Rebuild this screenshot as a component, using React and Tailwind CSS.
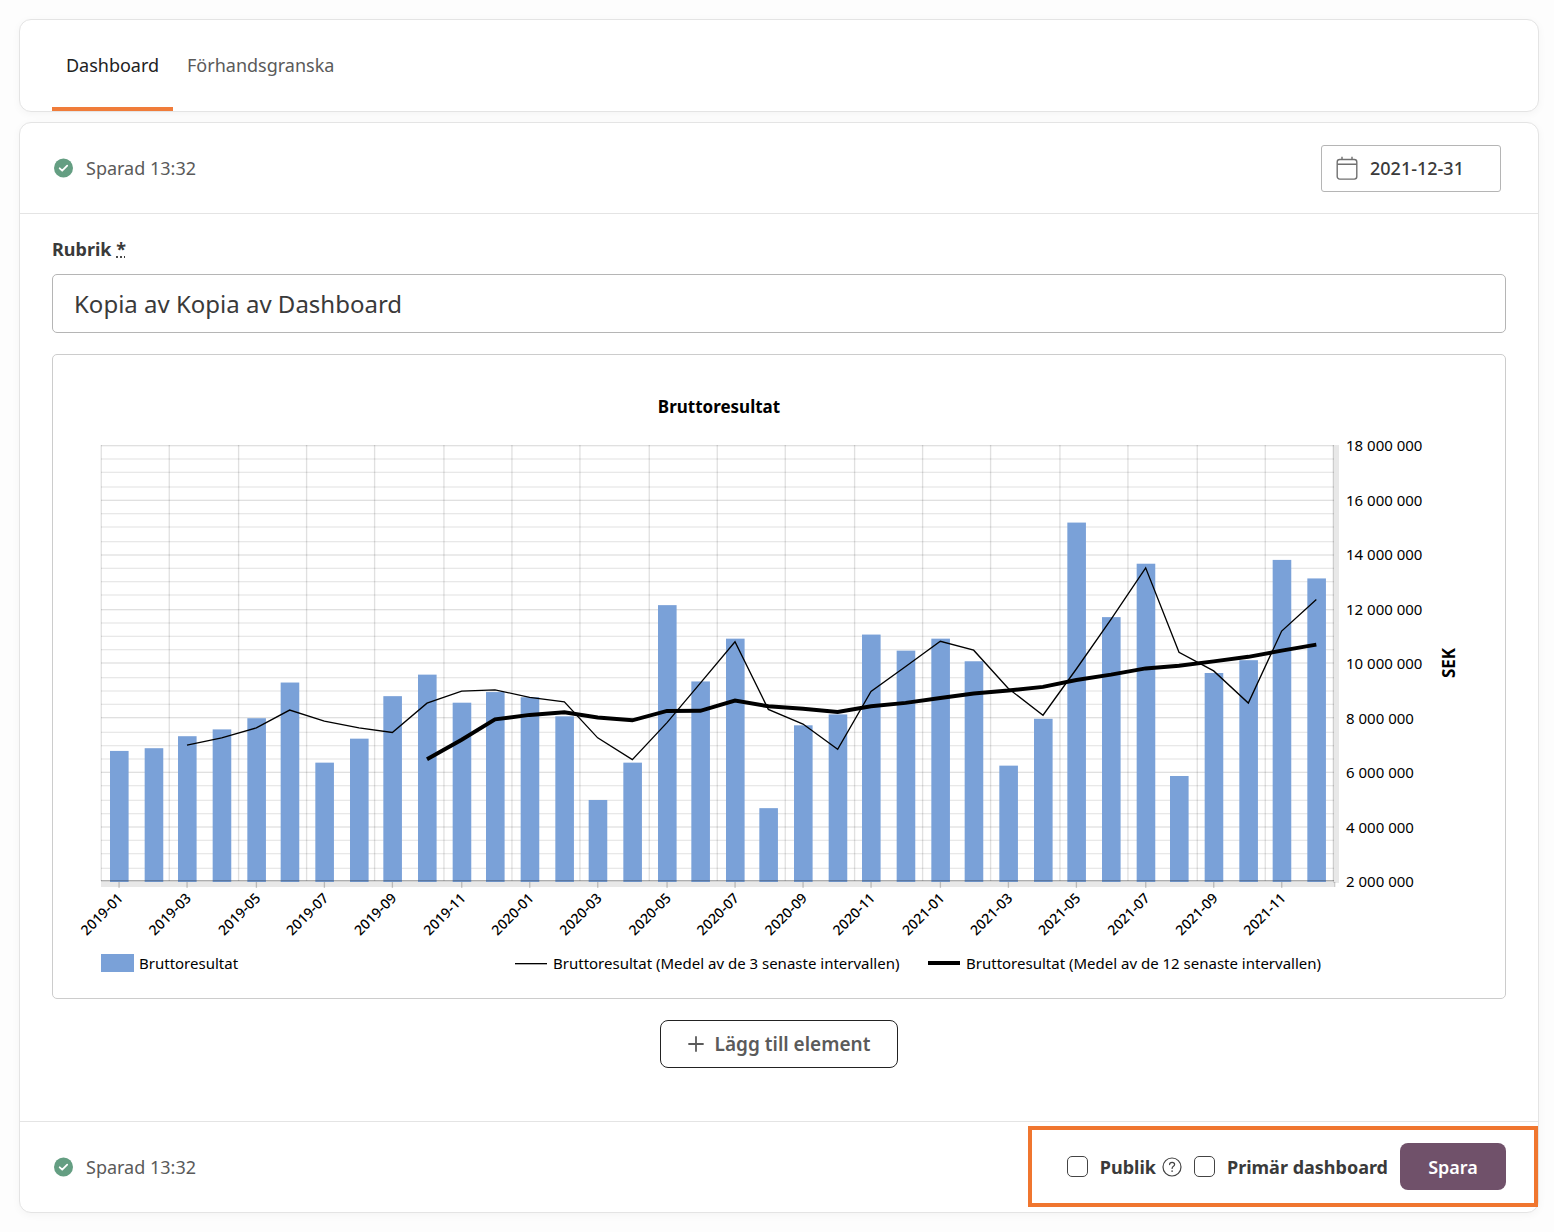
import React, { useState } from "react";

// Monthly gross profit in MSEK, starting 2019-01
const values = [
  6.81, 6.91, 7.35, 7.6, 8.01, 9.32, 6.38, 7.26, 8.82, 9.61, 8.58, 8.97,
  8.78, 8.08, 5.01, 6.38, 12.16, 9.36, 10.93, 4.71, 7.75, 8.15, 11.08, 10.49,
  10.93, 10.1, 6.27, 7.99, 15.19, 11.72, 13.68, 5.89, 9.67, 10.14, 13.82, 13.14,
];

const PLOT = { left: 48, right: 1281, top: 91, bottom: 527 };
const MAX = 18;
const MIN = 2;

const snap = (v) => (Math.round(v * 0.75) * 4) / 3;
const xAt = (i) => 66 + snap(i * 34.21);
const yAt = (v) =>
  PLOT.top + ((MAX - v) / (MAX - MIN)) * (PLOT.bottom - PLOT.top);

const monthLabel = (i) =>
  `${2019 + Math.floor(i / 12)}-${String((i % 12) + 1).padStart(2, "0")}`;

// Points of a trailing average over the last n months
const average = (n, start) =>
  values
    .map((_, i) => {
      const part = values.slice(Math.max(0, i - n + 1), i + 1);
      return [xAt(i), yAt(part.reduce((a, b) => a + b, 0) / n)];
    })
    .slice(start)
    .map((p) => p.join(","))
    .join(" ");

function Chart() {
  const rows = Array.from({ length: 32 }, (_, i) => i);
  const columns = Array.from({ length: 19 }, (_, i) => i);
  const axisLabels = [18, 16, 14, 12, 10, 8, 6, 4, 2];

  return (
    <svg
      viewBox="0 0 1452 643"
      className="block h-auto w-full"
      role="img"
      aria-label="Bruttoresultat"
    >
      <text
        x="666"
        y="58"
        textAnchor="middle"
        className="fill-black text-[17px] font-bold"
      >
        Bruttoresultat
      </text>

      {/* Grid */}
      {rows.map((i) => (
        <rect
          key={i}
          x={PLOT.left}
          y={PLOT.top + snap(i * 13.62) - 1}
          width={PLOT.right - PLOT.left}
          height="1.33"
          fill="#000"
          opacity={i % 4 === 0 ? 0.12 : 0.09}
        />
      ))}
      {columns.map((i) => (
        <rect
          key={i}
          x={PLOT.left + snap(i * 68.46) - 0.4}
          y={PLOT.top - 1}
          width="1.33"
          height={PLOT.bottom - PLOT.top}
          fill="#000"
          opacity="0.12"
        />
      ))}

      {/* Axis bands */}
      <rect x="1280" y="90" width="6" height="438" fill="#000" opacity="0.09" />
      <rect x="48" y="525" width="1233" height="7" fill="#000" opacity="0.09" />

      {/* Bars */}
      {values.map((v, i) => (
        <rect
          key={i}
          x={xAt(i) - 9}
          y={yAt(v)}
          width="18.6"
          height={PLOT.bottom - yAt(v)}
          fill="#7aa1d8"
        />
      ))}
      <rect x="48" y="525" width="1233" height="1.33" fill="#000" opacity="0.25" />

      {values.map((_, i) =>
        i % 2 === 0 ? (
          <g key={i}>
            <rect
              x={xAt(i) - 0.6}
              y="527"
              width="1.33"
              height="6"
              fill="#000"
              opacity="0.2"
            />
            <text
              transform={`translate(${xAt(i) + 5} 544) rotate(-45)`}
              textAnchor="end"
              className="fill-black text-[14px] font-medium"
            >
              {monthLabel(i)}
            </text>
          </g>
        ) : null
      )}
      <rect x="1281" y="527" width="1.33" height="5" fill="#000" opacity="0.2" />

      {/* Averages */}
      <polyline points={average(3, 2)} fill="none" stroke="#000" strokeWidth="1.33" />
      <polyline points={average(12, 9)} fill="none" stroke="#000" strokeWidth="4" />

      {axisLabels.map((v) => (
        <text key={v} x="1293" y={yAt(v) + 5} className="fill-black text-[15px]">
          {v} 000 000
        </text>
      ))}
      <text
        transform="translate(1402 308) rotate(-90)"
        textAnchor="middle"
        className="fill-black text-[17px] font-bold"
      >
        SEK
      </text>

      {/* Legend */}
      <rect x="48" y="599" width="33" height="18" fill="#7aa1d8" />
      <text x="86" y="614" className="fill-black text-[15px]">
        Bruttoresultat
      </text>
      <rect x="462" y="608" width="32" height="1.33" fill="#000" />
      <text x="500" y="614" className="fill-black text-[15px]">
        Bruttoresultat (Medel av de 3 senaste intervallen)
      </text>
      <rect x="875" y="606" width="32" height="4" fill="#000" />
      <text x="913" y="614" className="fill-black text-[15px]">
        Bruttoresultat (Medel av de 12 senaste intervallen)
      </text>
    </svg>
  );
}

function Saved() {
  return (
    <div className="flex items-center gap-3 text-lg text-[#5a5a5a]">
      <svg viewBox="0 0 20 20" className="size-5">
        <circle cx="9.5" cy="10" r="9.5" fill="#649e82" />
        <path
          d="M5.700 10.300l2.500 2.400 5-5"
          fill="none"
          stroke="#fff"
          strokeWidth="1.8"
          strokeLinecap="round"
          strokeLinejoin="round"
        />
      </svg>
      <span>Sparad 13:32</span>
    </div>
  );
}

function CalendarIcon() {
  return (
    <svg
      viewBox="0 0 22 24"
      className="h-6 w-[22px] shrink-0"
      fill="none"
      stroke="#707070"
      strokeWidth="1.4"
    >
      <rect x="1.2" y="3.5" width="19.6" height="19.6" rx="2.5" />
      <path d="M1.2 8.3h19.6M6 .8v2.7M16 .8v2.7" />
    </svg>
  );
}

const App = () => {
  const [title, setTitle] = useState("Kopia av Kopia av Dashboard");
  const [date, setDate] = useState("2021-12-31");
  const [isPublic, setIsPublic] = useState(false);
  const [primary, setPrimary] = useState(false);

  const card =
    "rounded-xl border border-[#e4e4e4] bg-white shadow-[0_2px_8px_rgba(0,0,0,0.04)]";
  const checkbox =
    "size-[21px] appearance-none rounded-[5px] border border-[#444] bg-white checked:bg-[#70516a]";

  return (
    <div className="min-h-screen bg-[#fdfdfd] pt-[19px] pr-[15px] pb-[19px] pl-[19px] font-['Noto_Sans',sans-serif] text-[#3a3a3a]">
      {/* Tabs */}
      <nav className={`${card} flex h-[93px] px-8 text-lg`}>
        <a
          href="#dashboard"
          className="flex w-[121px] items-center justify-center border-b-4 border-[#f07c3a] pt-[2px] text-[#222]"
        >
          Dashboard
        </a>
        <a
          href="#preview"
          className="flex items-center px-[14px] pb-[2px] text-[#5a5a5a]"
        >
          Förhandsgranska
        </a>
      </nav>

      <main className={`${card} mt-[10px]`}>
        <header className="flex h-[91px] items-center justify-between border-b border-[#e4e4e4] pr-[37px] pl-[34px]">
          <Saved />
          <label className="flex h-[47px] w-[180px] items-center gap-3 rounded-[3px] border border-[#b5b5b5] px-[14px]">
            <CalendarIcon />
            <input
              type="text"
              aria-label="Datum"
              value={date}
              onChange={(e) => setDate(e.target.value)}
              className="w-full min-w-0 text-lg font-medium outline-none"
            />
          </label>
        </header>

        <div className="px-8 pt-[21px] pb-[53px]">
          <label htmlFor="title" className="block text-lg font-bold">
            Rubrik{" "}
            <abbr title="obligatorisk" className="underline decoration-dotted">
              *
            </abbr>
          </label>
          <input
            id="title"
            type="text"
            value={title}
            onChange={(e) => setTitle(e.target.value)}
            className="mt-[11px] h-[59px] w-full rounded-[5px] border border-[#b5b5b5] px-[21px] text-2xl outline-none"
          />

          <div className="mt-[21px] rounded-[5px] border border-[#ccc]">
            <Chart />
          </div>

          <div className="mt-[21px] flex justify-center">
            <button
              type="button"
              className="flex h-12 w-[238px] items-center justify-center gap-[11px] rounded-lg border border-[#222] bg-white text-[19px] font-semibold text-[#5a5a5a]"
            >
              <svg
                viewBox="0 0 16 16"
                className="size-4"
                stroke="#5a5a5a"
                strokeWidth="1.8"
                strokeLinecap="round"
              >
                <path d="M8 1v14M1 8h14" />
              </svg>
              Lägg till element
            </button>
          </div>
        </div>

        <footer className="flex h-[91px] items-center justify-between border-t border-[#e4e4e4] pb-px pl-[34px]">
          <Saved />
          <div className="flex h-[81px] items-center gap-3 border-4 border-[#f0762f] pr-7 pl-[35px] text-lg font-bold">
            <input
              id="public"
              type="checkbox"
              checked={isPublic}
              onChange={(e) => setIsPublic(e.target.checked)}
              className={checkbox}
            />
            <span className="flex items-center gap-[6px]">
              <label htmlFor="public">Publik</label>
              <svg
                viewBox="0 0 20 20"
                className="size-5"
                fill="none"
                stroke="#444"
                strokeWidth="1.2"
                strokeLinecap="round"
                strokeLinejoin="round"
              >
                <circle cx="10" cy="10" r="9" />
                <path d="M7.6 7.6c0-1.300 1.100-2.200 2.500-2.200s2.500.9 2.500 2.100c0 1.800-2.500 1.900-2.500 3.900" />
                <path d="M10.1 14v.2" strokeWidth="1.6" />
              </svg>
            </span>
            <input
              id="primary"
              type="checkbox"
              checked={primary}
              onChange={(e) => setPrimary(e.target.checked)}
              className={checkbox}
            />
            <label htmlFor="primary">Primär dashboard</label>
            <button
              type="button"
              className="h-[47px] w-[106px] rounded-lg bg-[#70516a] font-semibold text-white"
            >
              Spara
            </button>
          </div>
        </footer>
      </main>
    </div>
  );
};

export default App;
